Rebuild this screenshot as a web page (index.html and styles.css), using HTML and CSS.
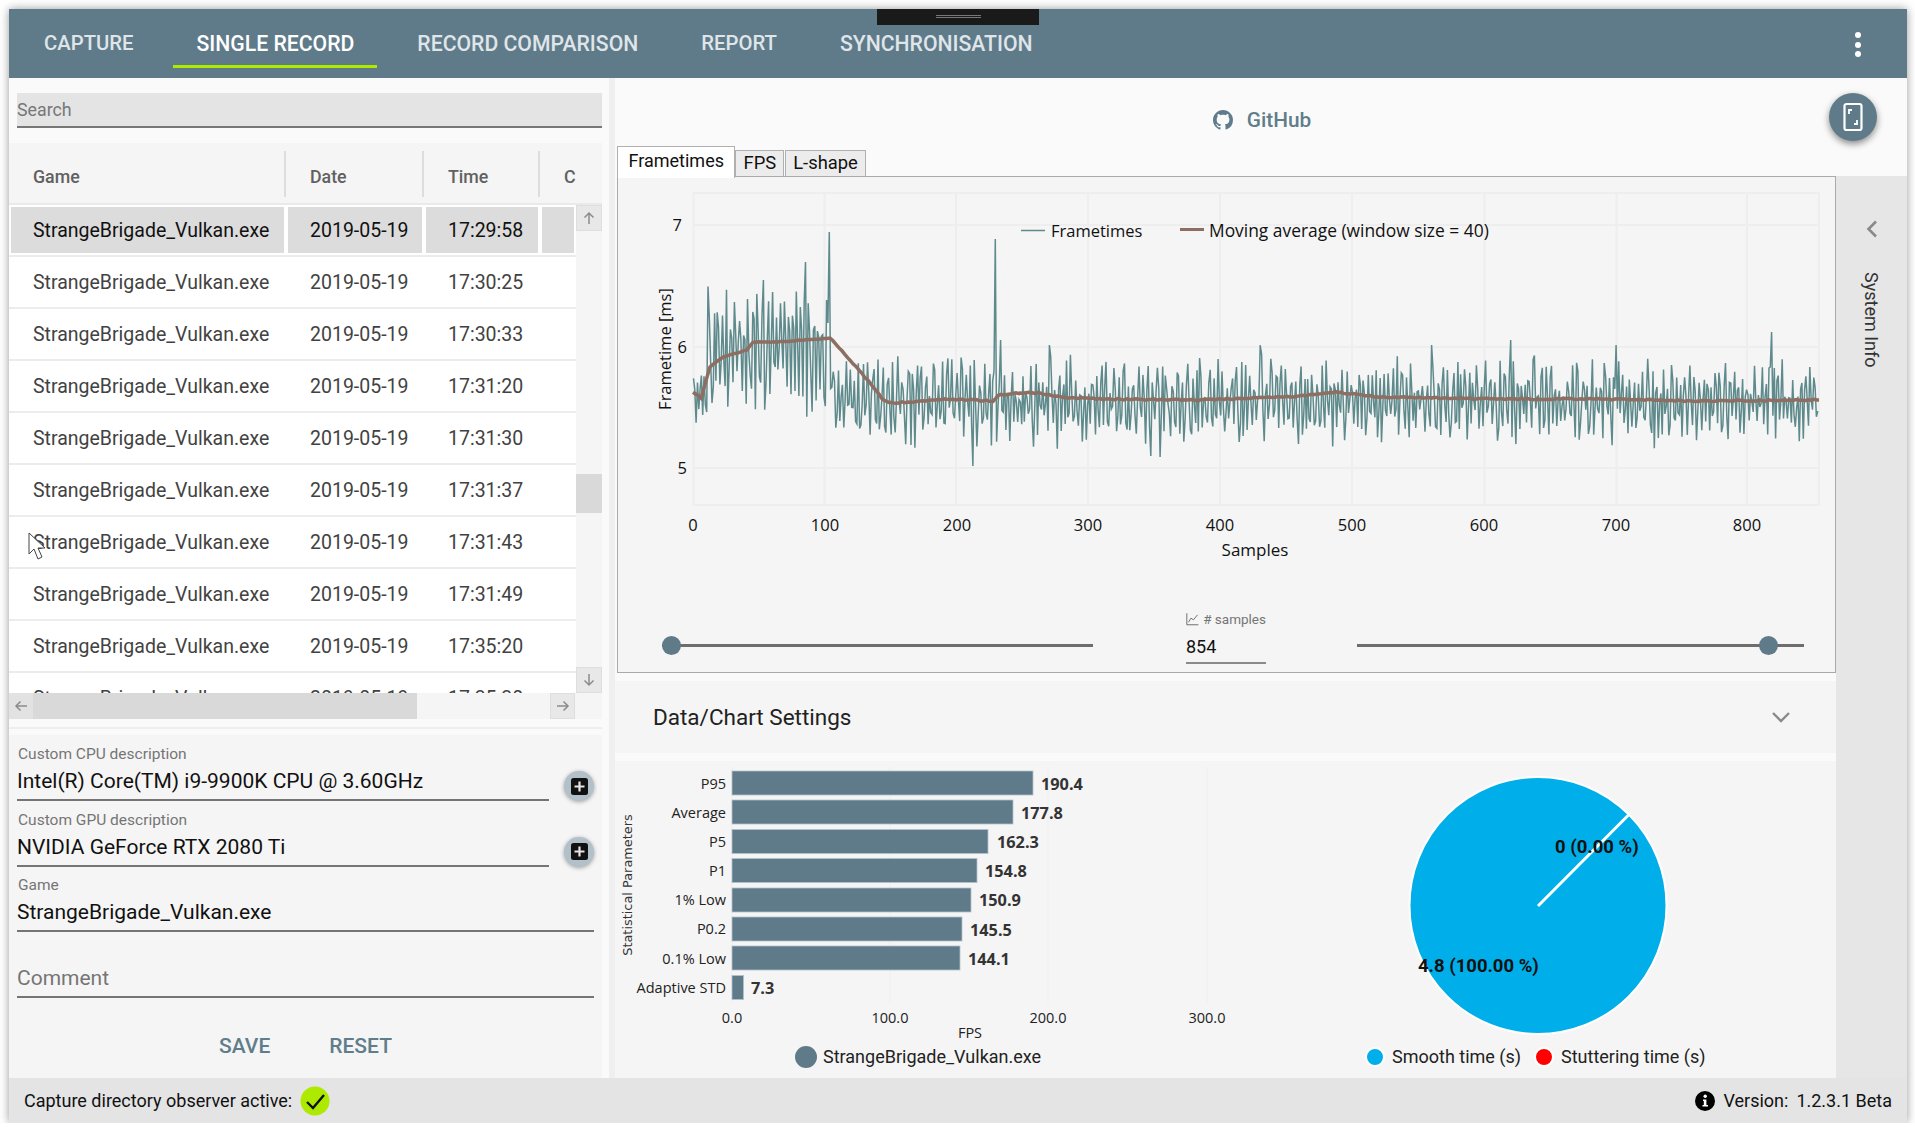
FILE: index.html
```html
<!DOCTYPE html>
<html lang="en">
<head>
<meta charset="utf-8">
<title>CapFrameX</title>
<link rel="stylesheet" href="styles.css">
</head>
<body>
<div class="window">
  <header class="appbar">
    <nav class="nav">
      <a class="nav-tab nav-tab-narrow">CAPTURE</a>
      <a class="nav-tab nav-tab-active">SINGLE RECORD</a>
      <a class="nav-tab">RECORD COMPARISON</a>
      <a class="nav-tab nav-tab-narrow">REPORT</a>
      <a class="nav-tab">SYNCHRONISATION</a>
    </nav>
    <div class="kebab"><i></i><i></i><i></i></div>
    <div class="drag-handle"><i></i><i></i></div>
  </header>

  <main class="main">
    <aside class="left">
      <div class="search">Search</div>
      <section class="table">
        <div class="thead">
          <div class="th th-game">Game</div>
          <div class="th th-date">Date</div>
          <div class="th th-time">Time</div>
          <div class="th th-c">C</div>
        </div>
        <div class="tbody">
          <div class="rows">
            <div class="row row-selected"><div class="td td-game">StrangeBrigade_Vulkan.exe</div><div class="td td-date">2019-05-19</div><div class="td td-time">17:29:58</div><div class="td td-c"></div></div>
            <div class="row"><div class="td td-game">StrangeBrigade_Vulkan.exe</div><div class="td td-date">2019-05-19</div><div class="td td-time">17:30:25</div><div class="td td-c"></div></div>
            <div class="row"><div class="td td-game">StrangeBrigade_Vulkan.exe</div><div class="td td-date">2019-05-19</div><div class="td td-time">17:30:33</div><div class="td td-c"></div></div>
            <div class="row"><div class="td td-game">StrangeBrigade_Vulkan.exe</div><div class="td td-date">2019-05-19</div><div class="td td-time">17:31:20</div><div class="td td-c"></div></div>
            <div class="row"><div class="td td-game">StrangeBrigade_Vulkan.exe</div><div class="td td-date">2019-05-19</div><div class="td td-time">17:31:30</div><div class="td td-c"></div></div>
            <div class="row"><div class="td td-game">StrangeBrigade_Vulkan.exe</div><div class="td td-date">2019-05-19</div><div class="td td-time">17:31:37</div><div class="td td-c"></div></div>
            <div class="row"><div class="td td-game">StrangeBrigade_Vulkan.exe</div><div class="td td-date">2019-05-19</div><div class="td td-time">17:31:43</div><div class="td td-c"></div></div>
            <div class="row"><div class="td td-game">StrangeBrigade_Vulkan.exe</div><div class="td td-date">2019-05-19</div><div class="td td-time">17:31:49</div><div class="td td-c"></div></div>
            <div class="row"><div class="td td-game">StrangeBrigade_Vulkan.exe</div><div class="td td-date">2019-05-19</div><div class="td td-time">17:35:20</div><div class="td td-c"></div></div>
            <div class="row"><div class="td td-game">StrangeBrigade_Vulkan.exe</div><div class="td td-date">2019-05-19</div><div class="td td-time">17:35:30</div><div class="td td-c"></div></div>
            <svg class="cursor" width="18" height="28" viewBox="0 0 18 28"><path d="M1 1v21l5-5 4 10 4-2-4-9h7z" fill="#fff" stroke="#444" stroke-width="1"/></svg>
          </div>
          <div class="vbar">
            <div class="sb-btn sb-btn-v"><svg width="14" height="14" viewBox="0 0 14 14"><path class="sb-arrow" d="M7 13V2M2.500 6.500 7 2l4.500 4.500"/></svg></div>
            <div class="vbar-thumb"></div>
            <div class="sb-btn sb-btn-v sb-btn-end"><svg width="14" height="14" viewBox="0 0 14 14"><path class="sb-arrow" d="M7 1v11M2.500 7.500 7 12l4.500-4.500"/></svg></div>
          </div>
        </div>
        <div class="hbar">
          <div class="hbar-left"><svg width="14" height="14" viewBox="0 0 14 14"><path class="sb-arrow" d="M13 7H2M6.500 2.500 2 7l4.500 4.500"/></svg></div>
          <div class="hbar-thumb"></div>
          <div class="hbar-space"></div>
          <div class="sb-btn hbar-right"><svg width="14" height="14" viewBox="0 0 14 14"><path class="sb-arrow" d="M1 7h11M7.500 2.500 12 7l-4.500 4.500"/></svg></div>
          <div class="hbar-corner"></div>
        </div>
      </section>
      <div class="left-rule"></div>
      <form class="form">
        <div class="field-row">
          <div class="field field-short">
            <label class="field-label">Custom CPU description</label>
            <div class="field-value">Intel(R) Core(TM) i9-9900K CPU @ 3.60GHz</div>
          </div>
          <div class="plus"><svg width="17" height="17" viewBox="0 0 17 17"><rect width="17" height="17" rx="2.500" fill="#111"/><path d="M8.500 3.500v10M3.500 8.500h10" stroke="#e4e4e4" stroke-width="2.200"/></svg></div>
        </div>
        <div class="field-row">
          <div class="field field-short">
            <label class="field-label">Custom GPU description</label>
            <div class="field-value">NVIDIA GeForce RTX 2080 Ti</div>
          </div>
          <div class="plus"><svg width="17" height="17" viewBox="0 0 17 17"><rect width="17" height="17" rx="2.500" fill="#111"/><path d="M8.500 3.500v10M3.500 8.500h10" stroke="#e4e4e4" stroke-width="2.200"/></svg></div>
        </div>
        <div class="field">
          <label class="field-label">Game</label>
          <div class="field-value">StrangeBrigade_Vulkan.exe</div>
        </div>
        <div class="field">
          <label class="field-label"></label>
          <div class="field-value field-placeholder">Comment</div>
        </div>
        <div class="actions"><span class="action">SAVE</span><span class="action">RESET</span></div>
      </form>
    </aside>

    <section class="right">
      <div class="right-head">
        <div class="github">
          <svg width="20" height="20" viewBox="0 0 16 16"><path fill="#607b8b" d="M8 0C3.580 0 0 3.580 0 8c0 3.540 2.290 6.530 5.470 7.590.4.070.55-.17.55-.38 0-.19-.01-.82-.01-1.490-2.010.37-2.530-.49-2.690-.94-.09-.23-.48-.94-.82-1.130-.28-.15-.68-.52-.01-.53.63-.01 1.080.58 1.230.82.72 1.210 1.870.87 2.330.66.070-.52.28-.87.51-1.070-1.780-.2-3.640-.89-3.640-3.950 0-.87.31-1.590.82-2.150-.08-.2-.36-1.020.08-2.120 0 0 .67-.21 2.200.82.64-.18 1.320-.27 2-.27.68 0 1.360.09 2 .27 1.530-1.040 2.200-.82 2.200-.82.44 1.100.16 1.920.08 2.120.51.56.82 1.270.82 2.150 0 3.070-1.870 3.750-3.650 3.950.29.25.54.73.54 1.480 0 1.070-.01 1.930-.01 2.200 0 .21.15.46.55.38A8.013 8.013 0 0016 8c0-4.420-3.580-8-8-8z"/></svg>
          <span>GitHub</span>
        </div>
        <div class="fab">
          <svg width="22" height="30" viewBox="0 0 22 30"><rect x="2.500" y="2" width="17" height="26" rx="2" fill="none" stroke="#fff" stroke-width="2.200"/><path d="M10 8H7v4M12 22h3v-4" fill="none" stroke="#fff" stroke-width="1.800"/></svg>
        </div>
      </div>
      <div class="tabstrip">
        <div class="ctab ctab-active">Frametimes</div>
        <div class="ctab">FPS</div>
        <div class="ctab">L-shape</div>
      </div>
      <div class="right-body">
        <div class="content">
          <div class="tabpanel">
            <svg class="frame-chart" width="1216" height="430" viewBox="618 177 1216 430">
              <g class="grid">
                <path d="M693.500 193H1819V505H693.500Z"/>
                <path d="M693.500 225H1819M693.500 347H1819M693.500 468H1819"/>
                <path d="M824.500 193V505M956 193V505M1088 193V505M1220 193V505M1352 193V505M1484.500 193V505M1616.500 193V505M1747 193V505"/>
              </g>
              <polyline id="frametimes" class="line-ft" points=""/>
              <polyline id="movingavg" class="line-ma" points=""/>
              <g class="axis-text">
                <text x="682" y="231" text-anchor="end">7</text>
                <text x="687" y="353" text-anchor="end">6</text>
                <text x="687" y="474" text-anchor="end">5</text>
                <text x="693" y="531" text-anchor="middle">0</text>
                <text x="825" y="531" text-anchor="middle">100</text>
                <text x="957" y="531" text-anchor="middle">200</text>
                <text x="1088" y="531" text-anchor="middle">300</text>
                <text x="1220" y="531" text-anchor="middle">400</text>
                <text x="1352" y="531" text-anchor="middle">500</text>
                <text x="1484" y="531" text-anchor="middle">600</text>
                <text x="1616" y="531" text-anchor="middle">700</text>
                <text x="1747" y="531" text-anchor="middle">800</text>
                <text class="axis-wide" x="1255" y="556" text-anchor="middle">Samples</text>
                <text transform="translate(671 349) rotate(-90)" text-anchor="middle">Frametime [ms]</text>
                <text x="1051" y="236.500">Frametimes</text>
                <text class="axis-long" x="1209" y="236.500">Moving average (window size = 40)</text>
              </g>
              <path class="legend-ft" d="M1021 230.500h24"/>
              <path class="legend-ma" d="M1180 229.500h24"/>
            </svg>
            <div class="sliders">
              <div class="slider slider-left"><i class="slider-thumb"></i></div>
              <div class="samples">
                <div class="samples-label">
                  <svg width="16" height="16" viewBox="0 0 16 16"><path d="M1 1v14h14M3 12l3-5 3 2 5-6" fill="none" stroke="#707070" stroke-width="1.200"/></svg>
                  <span># samples</span>
                </div>
                <div class="samples-value">854</div>
              </div>
              <div class="slider slider-right"><i class="slider-thumb"></i></div>
            </div>
          </div>
          <div class="expander">
            <span>Data/Chart Settings</span>
            <svg width="20" height="12" viewBox="0 0 20 12"><path d="M2 2l8 8 8-8" fill="none" stroke="#8a8a8a" stroke-width="2.400"/></svg>
          </div>
          <div class="charts">
            <svg width="1221" height="317" viewBox="615 761 1221 317">
              <path class="grid-light" d="M732 767V1003M890 767V1003M1048 767V1003M1207 767V1003"/>
              <g class="bars">
                <rect x="732" y="771" width="301" height="24"/>
                <rect x="732" y="800" width="281" height="24"/>
                <rect x="732" y="829.500" width="256" height="24"/>
                <rect x="732" y="858.500" width="245" height="24"/>
                <rect x="732" y="888" width="239" height="24"/>
                <rect x="732" y="917" width="230" height="24"/>
                <rect x="732" y="946" width="228" height="24"/>
                <rect x="732" y="975.500" width="11.500" height="24"/>
              </g>
              <g class="cat-text">
                <text x="726" y="788.500">P95</text>
                <text x="726" y="817.500">Average</text>
                <text x="726" y="846.500">P5</text>
                <text x="726" y="875.500">P1</text>
                <text x="726" y="905">1% Low</text>
                <text x="726" y="934">P0.2</text>
                <text x="726" y="963.500">0.1% Low</text>
                <text x="726" y="993">Adaptive STD</text>
              </g>
              <g class="val-text">
                <text x="1041" y="790">190.4</text>
                <text x="1021" y="819">177.8</text>
                <text x="997" y="848">162.3</text>
                <text x="985" y="877">154.8</text>
                <text x="979" y="906">150.9</text>
                <text x="970" y="936">145.5</text>
                <text x="968" y="965">144.1</text>
                <text x="751" y="994">7.3</text>
              </g>
              <g class="tick-text">
                <text x="732" y="1023">0.0</text>
                <text x="890" y="1023">100.0</text>
                <text x="1048" y="1023">200.0</text>
                <text x="1207" y="1023">300.0</text>
                <text x="970" y="1038">FPS</text>
              </g>
              <text class="stat-title" transform="translate(632 885) rotate(-90)">Statistical Parameters</text>
              <circle class="bar-dot" cx="806" cy="1057" r="11"/>
              <text class="legend-text" x="823" y="1063">StrangeBrigade_Vulkan.exe</text>
              <circle class="pie" cx="1538" cy="905.500" r="128.500"/>
              <path class="pie-line" d="M1538 906L1628.500 815"/>
              <text class="pie-label" x="1555" y="853">0 (0.00 %)</text>
              <text class="pie-label" x="1418" y="972">4.8 (100.00 %)</text>
              <circle class="dot-blue" cx="1375" cy="1057" r="9"/>
              <text class="legend-text" x="1392" y="1063">Smooth time (s)</text>
              <circle class="dot-red" cx="1544" cy="1057" r="9"/>
              <text class="legend-text" x="1561" y="1063">Stuttering time (s)</text>
            </svg>
          </div>
        </div>
        <aside class="sidebar">
          <svg width="14" height="20" viewBox="0 0 14 20"><path d="M11 2.500 3.500 10 11 17.500" fill="none" stroke="#8a8a8a" stroke-width="2.600"/></svg>
          <span class="sidebar-text">System Info</span>
        </aside>
      </div>
    </section>
  </main>

  <footer class="status">
    <div class="status-left">
      <span>Capture directory observer active:</span>
      <svg width="30" height="30" viewBox="0 0 30 30"><circle cx="15" cy="15" r="14.500" fill="#aeea00"/><path d="M7 16l6 6 11-13" fill="none" stroke="#111" stroke-width="2.400"/></svg>
    </div>
    <div class="status-right">
      <svg width="20" height="20" viewBox="0 0 20 20"><circle cx="10" cy="10" r="10" fill="#000"/><circle cx="10.200" cy="5.200" r="1.700" fill="#fff"/><path d="M8 8.500h3.400V14H13v1.500H7.500V14h1.300V10H8z" fill="#fff"/></svg>
      <span>Version:</span>
      <span>1.2.3.1 Beta</span>
    </div>
  </footer>
</div>
<script src="chart.js"></script>
</body>
</html>
```

FILE: styles.css
```css
* { box-sizing: border-box; }
html, body { margin: 0; padding: 0; background: #fff; }
body { padding: 9px 0 0 9px; font-family: Roboto, "Liberation Sans", sans-serif; color: #212121; overflow: hidden; }

.window { width: 1898px; height: 1114px; display: flex; flex-direction: column; background: #fafafa; box-shadow: 0 0 9px rgba(0,0,0,.4); }

/* App bar */
.appbar { position: relative; height: 69px; flex: none; background: #5f7b8a; display: flex; justify-content: space-between; padding: 0 46px 0 12px; }
.nav { display: flex; gap: 17px; height: 59px; }
.nav-tab { display: flex; align-items: center; padding: 12px 23px 0; border-bottom: 3px solid transparent; color: #dfe5e8; font-size: 21.200px; font-weight: 500; }
.nav-tab-narrow { font-size: 20.300px; }
.nav-tab-active { color: #fff; border-bottom-color: #aeea00; }
.kebab { display: flex; flex-direction: column; gap: 3.500px; padding-top: 23px; }
.kebab i { display: block; width: 6px; height: 6px; border-radius: 50%; background: #fff; }
.drag-handle { position: absolute; left: 868px; top: 0; width: 162px; height: 16px; background: #1a1a1a; display: flex; flex-direction: column; align-items: center; gap: 1px; padding-top: 6px; }
.drag-handle i { display: block; width: 45px; height: 1px; background: #777; }

.main { flex: 1; display: flex; min-height: 0; }

/* Left column */
.left { width: 606px; flex: none; border-right: 6px solid #efefef; padding-right: 7px; display: flex; flex-direction: column; }
.search { margin: 15px 0 15px 8px; height: 35px; background: #e4e4e4; border-bottom: 2px solid #777; color: #777; font-size: 17.800px; line-height: 34px; }

.table { background: #f5f5f5; flex: none; }
.thead { display: flex; height: 62px; border-bottom: 2px solid #eaeaea; padding-top: 8px; padding-bottom: 6px; }
.th { display: flex; align-items: center; padding: 4px 0 0 24px; border-right: 2px solid #ddd; color: #616161; font-size: 17.800px; font-weight: 500; }
.th-game, .td-game { width: 277px; }
.th-date, .td-date { width: 138px; }
.th-time, .td-time { width: 116px; }
.th-c { border-right: 0; }
.td-c { width: 35.500px; }

.tbody { display: flex; height: 488px; overflow: hidden; }
.rows { position: relative; width: 566.500px; flex: none; background: #fff; }
.row { display: flex; height: 52px; border-bottom: 2px solid #ececec; color: #424242; font-size: 19.500px; }
.td { padding-left: 22px; border: 2px solid transparent; line-height: 47px; white-space: nowrap; }
.row-selected { color: #111; }
.row-selected .td { background: #dcdcdc; background-clip: padding-box; }
.cursor { position: absolute; left: 19px; top: 327px; }

.vbar { flex: 1; display: flex; flex-direction: column; }
.sb-btn { display: flex; align-items: center; justify-content: center; background: #e8e8e8; border: 1px solid #dedede; }
.sb-btn-v { height: 26px; }
.sb-btn-end { margin-top: auto; }
.vbar-thumb { height: 39px; margin-top: 243px; background: #d9d9d9; }
.sb-arrow { fill: none; stroke: #8c8c8c; stroke-width: 1.500; }

.hbar { display: flex; height: 26px; }
.hbar-left { width: 24px; display: flex; align-items: center; justify-content: center; background: #e2e2e2; }
.hbar-thumb { width: 384px; background: #d9d9d9; }
.hbar-space { flex: 1; }
.hbar-right { width: 25px; }
.hbar-corner { width: 27px; }

.left-rule { height: 2px; margin-top: 8px; background: #eeeeee; flex: none; }

.form { flex: 1; margin-top: 6px; background: #f5f5f5; padding: 10px 8px 0; display: flex; flex-direction: column; gap: 9.700px; }
.field-row { display: flex; justify-content: space-between; align-items: flex-start; }
.field { height: 56px; border-bottom: 2px solid #757575; }
.field-short { width: 532px; }
.field-label { display: block; height: 18px; padding-left: 1px; color: #757575; font-size: 15.500px; line-height: 18px; white-space: nowrap; }
.field-value { margin-top: 3px; height: 30px; color: #111; font-size: 21px; line-height: 30px; white-space: nowrap; }
.field-placeholder { color: #757575; }
.plus { width: 30px; height: 30px; margin-top: 26px; border-radius: 50%; background: #b1c0c9; box-shadow: 0 1px 4px rgba(0,0,0,.35); display: flex; align-items: center; justify-content: center; }
.actions { display: flex; justify-content: center; gap: 59px; margin-top: 26px; color: #607d8b; font-size: 21px; font-weight: 500; }

/* Right column */
.right { flex: 1; min-width: 0; display: flex; flex-direction: column; }
.right-head { height: 68px; flex: none; padding: 15px 0 0 2px; display: grid; grid-template-columns: 1fr auto 1fr; align-items: center; }
.github { grid-column: 2; display: flex; align-items: center; gap: 14px; color: #607d8b; font-size: 20.800px; font-weight: 500; }
.fab { grid-column: 3; justify-self: end; margin: 0 30px 5px 0; width: 48px; height: 48px; border-radius: 50%; background: #5f7b8a; box-shadow: 0 3px 7px rgba(0,0,0,.45); display: flex; align-items: center; justify-content: center; }

.tabstrip { position: relative; height: 30px; flex: none; display: flex; align-items: flex-end; padding-left: 2px; }
.ctab { height: 26px; padding: 0 7px; border: 1px solid #b0b0b0; border-bottom: 0; margin-right: 1px; background: #ececec; color: #111; font-size: 18.400px; line-height: 24px; }
.ctab-active { height: 32px; margin: 0 0 -2px; padding: 0 10.500px; background: #fff; font-size: 18px; line-height: 27px; position: relative; z-index: 1; }

.right-body { flex: 1; min-height: 0; display: flex; }
.content { width: 1221px; flex: none; display: flex; flex-direction: column; }
.tabpanel { margin-left: 2px; height: 497px; flex: none; background: #f5f5f5; border: 1px solid #aaa; }
.frame-chart { display: block; }
.sliders { display: flex; align-items: flex-start; height: 64px; padding-left: 44px; }
.slider { position: relative; height: 19px; margin-top: 29px; }
.slider::before { content: ""; position: absolute; left: 0; right: 0; top: 8px; height: 3px; background: #6d6d6d; }
.slider-thumb { position: absolute; top: 0; width: 19px; height: 19px; border-radius: 50%; background: #5f7b8a; }
.slider-left { width: 431px; }
.slider-left .slider-thumb { left: 0; }
.slider-right { width: 447px; margin-left: 91px; }
.slider-right .slider-thumb { right: 26px; }
.samples { width: 80px; margin-left: 93px; height: 57px; border-bottom: 2px solid #8a8a8a; }
.samples-label { display: flex; align-items: center; gap: 4px; height: 24px; color: #757575; font-size: 13.500px; white-space: nowrap; }
.samples-value { margin-top: 4px; color: #111; font-size: 18px; line-height: 24px; }

.expander { margin-top: 8px; height: 72px; flex: none; background: #f5f5f5; display: flex; justify-content: space-between; align-items: center; padding: 0 45px 0 38px; color: #212121; font-size: 22.500px; }
.charts { margin-top: 8px; flex: 1; background: #f5f5f5; }
.charts svg { display: block; }

.sidebar { flex: 1; background: #e6e6e6; display: flex; flex-direction: column; align-items: center; padding-top: 43px; gap: 33px; }
.sidebar-text { writing-mode: vertical-rl; color: #333; font-size: 18px; }

/* Chart paint */
.grid path { fill: none; stroke: #eeeeee; stroke-width: 2; }
.grid-light { fill: none; stroke: #efefef; stroke-width: 1; }
.line-ft { fill: none; stroke: #5f8a8c; stroke-width: 1.500; }
.line-ma { fill: none; stroke: #8d6e63; stroke-width: 3.500; }
.legend-ft { stroke: #5f8a8c; stroke-width: 1.500; }
.legend-ma { stroke: #8d6e63; stroke-width: 3; }
.axis-text text { font-family: "Open Sans", sans-serif; font-size: 16.500px; fill: #111; }
.axis-text .axis-wide { font-size: 17px; }
.axis-text .axis-long { font-size: 17.400px; }
.bars rect { fill: #5f7b8a; stroke: #b3c1ca; stroke-width: .8; }
.cat-text text { font-family: "Open Sans", sans-serif; font-size: 14.500px; fill: #222; text-anchor: end; }
.val-text text { font-family: "Open Sans", sans-serif; font-size: 16.300px; font-weight: 700; fill: #333; }
.tick-text text { font-family: "Open Sans", sans-serif; font-size: 14.500px; fill: #222; text-anchor: middle; }
.stat-title { font-family: "DejaVu Sans", sans-serif; font-size: 12.900px; fill: #333; text-anchor: middle; }
.bar-dot { fill: #5f7b8a; }
.legend-text { font-family: Roboto, sans-serif; font-size: 18px; fill: #222; }
.pie { fill: #00aeea; stroke: #fff; stroke-width: 2; }
.pie-line { stroke: #fff; stroke-width: 3; }
.pie-label { font-family: Roboto, sans-serif; font-size: 18.500px; font-weight: 700; fill: #111; }
.dot-blue { fill: #00aeea; stroke: #fff; stroke-width: 2; }
.dot-red { fill: #ff0000; stroke: #fff; stroke-width: 2; }

/* Status bar */
.status { height: 45px; flex: none; background: #e4e4e4; display: flex; justify-content: space-between; align-items: center; padding: 0 15px; color: #111; font-size: 18px; }
.status-left, .status-right { display: flex; align-items: center; gap: 8px; }
```

FILE: chart.js
```js
// Frametime series (854 samples) and its moving average, plotted in page pixels.
(function () {
  var seed = 20190519;
  function rnd() {
    seed = (seed * 1664525 + 1013904223) % 4294967296;
    return seed / 4294967296;
  }
  var X0 = 693.5, DX = 1.318;
  function yOf(v) { return 347 - (v - 6) * 121.5; }

  var spikes = { 53: 280, 85: 262, 103: 232, 212: 466, 229: 239, 233: 340, 270: 345, 347: 456, 354: 457, 620: 340, 818: 332, 700: 345, 560: 345, 430: 345 };
  var pts = [];
  var phase = 0;
  for (var i = 0; i < 854; i++) {
    phase += 0.8 + rnd() * 2.2;
    var first = i <= 105;
    var base = first ? 5.99 : 5.55;
    var amp = first ? 0.55 : 0.38;
    if (i < 10) { amp *= 0.5; base = 5.6; }
    var r = rnd();
    var mix = first ? 0.5 + 0.5 * r : 0.35 + 0.65 * r;
    var v = base + Math.sin(phase) * amp * mix + (rnd() - 0.5) * 0.08;
    var y = spikes[i] !== undefined ? spikes[i] : yOf(v);
    pts.push((X0 + i * DX).toFixed(1) + "," + y.toFixed(1));
  }
  document.getElementById("frametimes").setAttribute("points", pts.join(" "));

  var ma = [[693, 392], [701, 398], [710, 367], [723, 357], [747, 350], [753, 342], [780, 342], [800, 340], [830, 338], [850, 360], [870, 383], [883, 400], [893, 403], [947, 399], [993, 401], [998, 395], [1020, 393], [1040, 393], [1060, 397], [1100, 399], [1200, 400], [1300, 396], [1335, 392], [1380, 397], [1500, 399], [1600, 399], [1700, 401], [1819, 400]];
  var out = [];
  for (var k = 0; k < ma.length - 1; k++) {
    var a = ma[k], b = ma[k + 1];
    for (var x = a[0]; x < b[0]; x += 3) {
      var t = (x - a[0]) / (b[0] - a[0]);
      var jitter = k > 5 ? (rnd() - 0.5) * 1.4 : (rnd() - 0.5) * 0.6;
      out.push(x + "," + (a[1] + (b[1] - a[1]) * t + jitter).toFixed(1));
    }
  }
  out.push("1819,400");
  document.getElementById("movingavg").setAttribute("points", out.join(" "));
})();
```
